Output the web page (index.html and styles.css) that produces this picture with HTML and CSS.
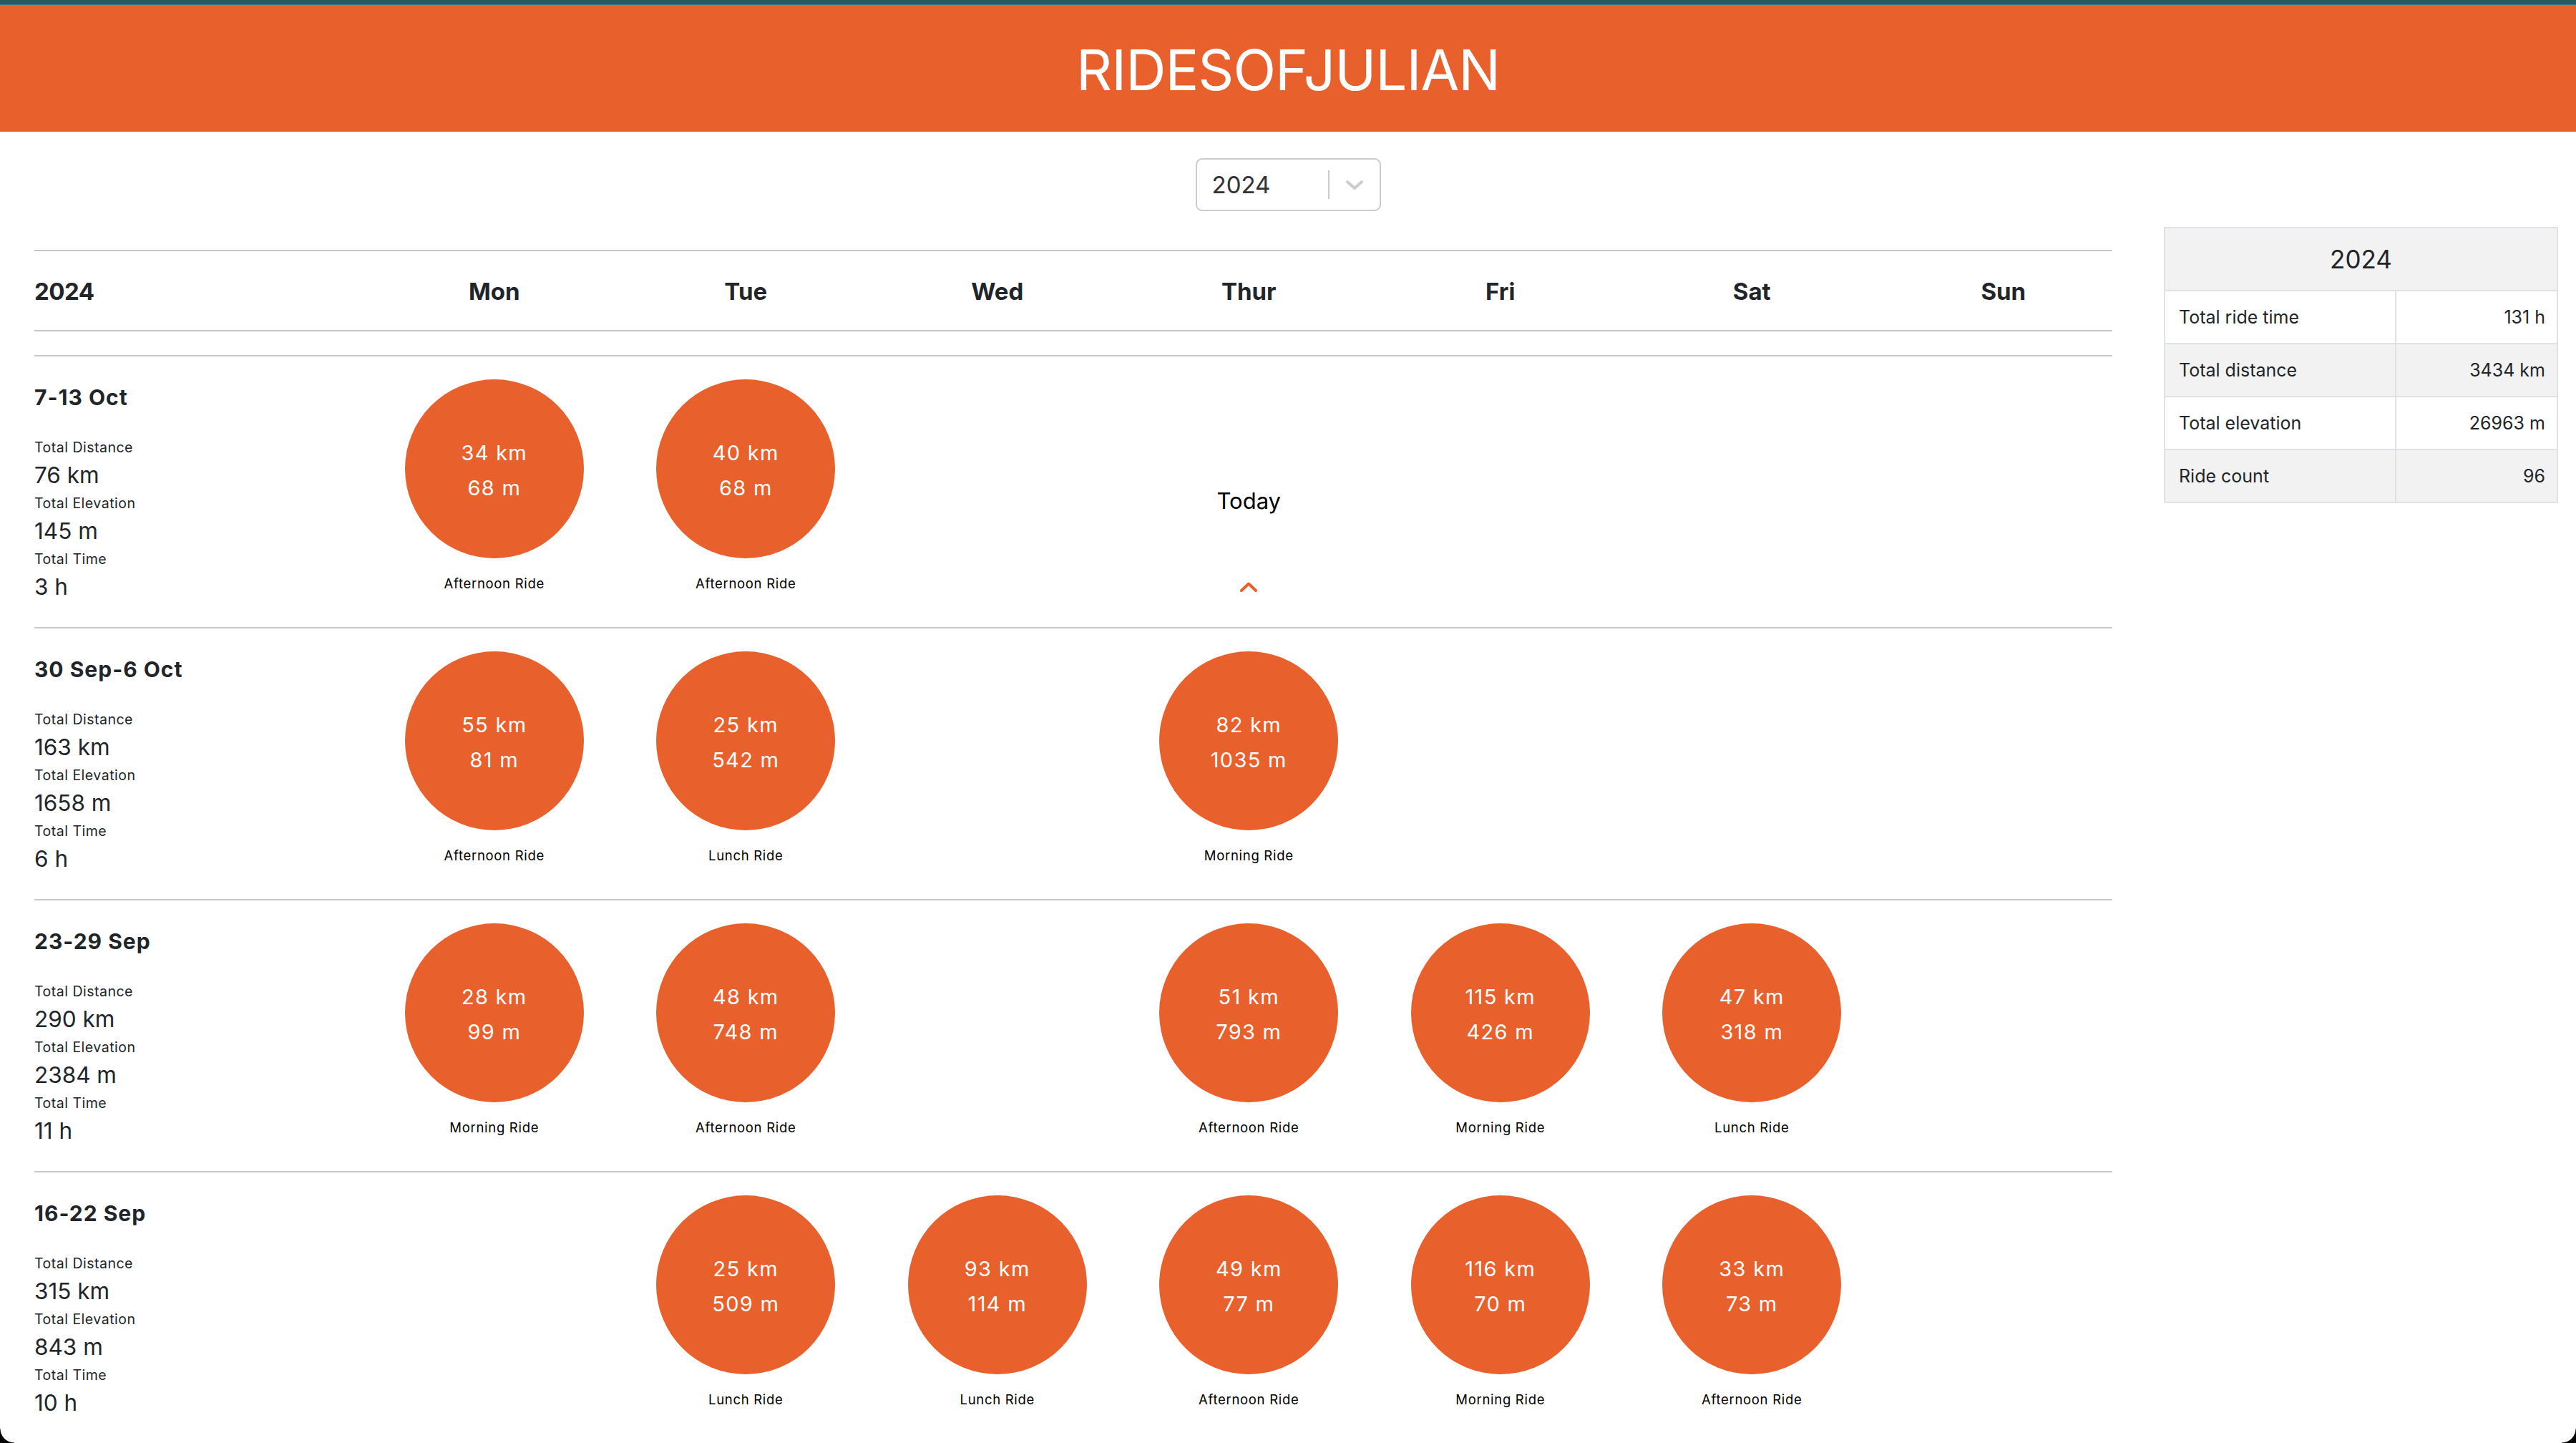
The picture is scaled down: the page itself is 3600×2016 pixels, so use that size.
FILE: index.html
```html
<!DOCTYPE html>
<html lang="en">
<head>
<meta charset="utf-8">
<title>RIDESOFJULIAN</title>
<link rel="stylesheet" href="styles.css">
</head>
<body>
<div class="chrome"></div>
<header class="topbar"><h1 class="brand">RIDESOFJULIAN</h1></header>

<div class="picker-wrap">
  <div class="picker">
    <span class="picker-value">2024</span>
    <span class="picker-sep"></span>
    <span class="picker-ind">
      <svg width="26" height="16" viewBox="0 0 26 16"><path d="M3 3 L13 12 L23 3" fill="none" stroke="#cccccc" stroke-width="4" stroke-linecap="round" stroke-linejoin="round"/></svg>
    </span>
  </div>
</div>

<div class="content">
  <div class="calendar">
    <div class="grid head">
      <div class="hcell first">2024</div>
      <div class="hcell">Mon</div>
      <div class="hcell">Tue</div>
      <div class="hcell">Wed</div>
      <div class="hcell">Thur</div>
      <div class="hcell">Fri</div>
      <div class="hcell">Sat</div>
      <div class="hcell">Sun</div>
    </div>
    <div class="spacer"></div>

    <div class="grid week">
      <div class="summary">
        <div class="wtitle">7-13 Oct</div>
        <div class="slabel">Total Distance</div><div class="svalue">76 km</div>
        <div class="slabel">Total Elevation</div><div class="svalue">145 m</div>
        <div class="slabel">Total Time</div><div class="svalue">3 h</div>
      </div>
      <div class="day"><div class="bubble"><span>34 km</span><span>68 m</span></div><div class="rname">Afternoon Ride</div></div>
      <div class="day"><div class="bubble"><span>40 km</span><span>68 m</span></div><div class="rname">Afternoon Ride</div></div>
      <div class="day"></div>
      <div class="day today"><div class="today-text">Today</div>
        <svg class="today-chev" width="26" height="16" viewBox="0 0 26 16"><path d="M3 13 L13 3.5 L23 13" fill="none" stroke="#e8602c" stroke-width="4" stroke-linecap="round" stroke-linejoin="round"/></svg>
      </div>
      <div class="day"></div>
      <div class="day"></div>
      <div class="day"></div>
    </div>

    <div class="grid week">
      <div class="summary">
        <div class="wtitle">30 Sep-6 Oct</div>
        <div class="slabel">Total Distance</div><div class="svalue">163 km</div>
        <div class="slabel">Total Elevation</div><div class="svalue">1658 m</div>
        <div class="slabel">Total Time</div><div class="svalue">6 h</div>
      </div>
      <div class="day"><div class="bubble"><span>55 km</span><span>81 m</span></div><div class="rname">Afternoon Ride</div></div>
      <div class="day"><div class="bubble"><span>25 km</span><span>542 m</span></div><div class="rname">Lunch Ride</div></div>
      <div class="day"></div>
      <div class="day"><div class="bubble"><span>82 km</span><span>1035 m</span></div><div class="rname">Morning Ride</div></div>
      <div class="day"></div>
      <div class="day"></div>
      <div class="day"></div>
    </div>

    <div class="grid week">
      <div class="summary">
        <div class="wtitle">23-29 Sep</div>
        <div class="slabel">Total Distance</div><div class="svalue">290 km</div>
        <div class="slabel">Total Elevation</div><div class="svalue">2384 m</div>
        <div class="slabel">Total Time</div><div class="svalue">11 h</div>
      </div>
      <div class="day"><div class="bubble"><span>28 km</span><span>99 m</span></div><div class="rname">Morning Ride</div></div>
      <div class="day"><div class="bubble"><span>48 km</span><span>748 m</span></div><div class="rname">Afternoon Ride</div></div>
      <div class="day"></div>
      <div class="day"><div class="bubble"><span>51 km</span><span>793 m</span></div><div class="rname">Afternoon Ride</div></div>
      <div class="day"><div class="bubble"><span>115 km</span><span>426 m</span></div><div class="rname">Morning Ride</div></div>
      <div class="day"><div class="bubble"><span>47 km</span><span>318 m</span></div><div class="rname">Lunch Ride</div></div>
      <div class="day"></div>
    </div>

    <div class="grid week">
      <div class="summary">
        <div class="wtitle">16-22 Sep</div>
        <div class="slabel">Total Distance</div><div class="svalue">315 km</div>
        <div class="slabel">Total Elevation</div><div class="svalue">843 m</div>
        <div class="slabel">Total Time</div><div class="svalue">10 h</div>
      </div>
      <div class="day"></div>
      <div class="day"><div class="bubble"><span>25 km</span><span>509 m</span></div><div class="rname">Lunch Ride</div></div>
      <div class="day"><div class="bubble"><span>93 km</span><span>114 m</span></div><div class="rname">Lunch Ride</div></div>
      <div class="day"><div class="bubble"><span>49 km</span><span>77 m</span></div><div class="rname">Afternoon Ride</div></div>
      <div class="day"><div class="bubble"><span>116 km</span><span>70 m</span></div><div class="rname">Morning Ride</div></div>
      <div class="day"><div class="bubble"><span>33 km</span><span>73 m</span></div><div class="rname">Afternoon Ride</div></div>
      <div class="day"></div>
    </div>
  </div>

  <aside class="stats">
    <div class="stats-head">2024</div>
    <div class="srow"><div class="sk">Total ride time</div><div class="sv">131 h</div></div>
    <div class="srow alt"><div class="sk">Total distance</div><div class="sv">3434 km</div></div>
    <div class="srow"><div class="sk">Total elevation</div><div class="sv">26963 m</div></div>
    <div class="srow alt last"><div class="sk">Ride count</div><div class="sv">96</div></div>
  </aside>
</div>

<div class="corner corner-left"></div>
<div class="corner corner-right"></div>
</body>
</html>
```

FILE: styles.css
```css
html, body {
  margin: 0;
  padding: 0;
  background: #ffffff;
}
body {
  font-family: Inter, "Liberation Sans", Arial, sans-serif;
  color: #212529;
  width: 3600px;
  height: 2016px;
  overflow: hidden;
}

.chrome {
  height: 6px;
  background: #275a5f;
  border-bottom: 1px solid #3f7b80;
}

.topbar {
  height: 177px;
  background: #e8602c;
  display: flex;
  align-items: center;
  justify-content: center;
}
.brand {
  margin: 4px 0 0 0;
  font-weight: 400;
  font-size: 78px;
  line-height: 94px;
  color: #ffffff;
  letter-spacing: -1px;
}

.picker-wrap {
  display: flex;
  justify-content: center;
  padding-top: 37px;
}
.picker {
  box-sizing: border-box;
  width: 259px;
  height: 74px;
  border: 2px solid #cccccc;
  border-radius: 9px;
  display: flex;
  align-items: center;
}
.picker-value {
  flex: 1;
  padding-left: 21px;
  font-size: 33px;
  color: #333333;
}
.picker-sep {
  width: 2px;
  height: 40px;
  background: #cccccc;
}
.picker-ind {
  width: 70px;
  display: flex;
  justify-content: center;
  align-items: center;
  padding-top: 2px;
}

.content {
  display: flex;
  align-items: flex-start;
  padding-left: 48px;
  margin-top: 22px;
  gap: 72px;
}

.calendar {
  width: 2904px;
  flex-shrink: 0;
  margin-top: 32px;
}

.grid {
  display: grid;
  grid-template-columns: 467px repeat(7, 351.5px);
  width: 2904px;
}

.head {
  border-top: 2px solid #c8c8c8;
  border-bottom: 2px solid #c8c8c8;
  padding: 32px 0 30px 0;
}
.hcell {
  font-weight: 700;
  font-size: 33px;
  line-height: 48px;
  text-align: center;
  color: #212529;
}
.hcell.first {
  text-align: left;
  letter-spacing: -0.5px;
}

.spacer {
  height: 33px;
}

.week {
  box-sizing: border-box;
  height: 380px;
  border-top: 2px solid #c8c8c8;
}

.summary {
  padding-top: 36px;
}
.wtitle {
  font-weight: 700;
  font-size: 30px;
  line-height: 43px;
  margin-bottom: 33px;
  letter-spacing: 1px;
  color: #212529;
}
.slabel {
  font-size: 19.5px;
  line-height: 30px;
  letter-spacing: 0.5px;
  color: #212529;
}
.svalue {
  font-size: 31.5px;
  line-height: 48px;
  color: #212529;
}

.day {
  display: flex;
  flex-direction: column;
  align-items: center;
  padding-top: 32px;
}
.bubble {
  box-sizing: border-box;
  width: 250px;
  height: 250px;
  padding-top: 4px;
  border-radius: 50%;
  background: #e8602c;
  color: #ffffff;
  display: flex;
  flex-direction: column;
  align-items: center;
  justify-content: center;
  font-size: 29px;
  line-height: 49px;
  letter-spacing: 1.3px;
}
.rname {
  margin-top: 21px;
  font-size: 18.5px;
  line-height: 28px;
  letter-spacing: 0.7px;
  color: #000000;
}

.today {
  padding-top: 178px;
}
.today-text {
  font-size: 31px;
  line-height: 48px;
  color: #000000;
}
.today-chev {
  margin-top: 88px;
}

.stats {
  box-sizing: border-box;
  width: 551px;
  flex-shrink: 0;
  border: 2px solid #dee2e6;
  color: #212529;
}
.stats-head {
  height: 86px;
  background: #f2f2f2;
  border-bottom: 2px solid #dee2e6;
  display: flex;
  align-items: center;
  justify-content: center;
  font-size: 35px;
}
.srow {
  display: grid;
  grid-template-columns: 323px 1fr;
  height: 72px;
  border-bottom: 2px solid #dee2e6;
  font-size: 25px;
}
.srow.last {
  border-bottom: none;
}
.srow.alt {
  background: #f2f2f2;
}
.sk {
  display: flex;
  align-items: center;
  padding-left: 19px;
  border-right: 2px solid #dee2e6;
}
.sv {
  display: flex;
  align-items: center;
  justify-content: flex-end;
  padding-right: 16px;
}

.corner {
  position: fixed;
  bottom: 0;
  width: 20px;
  height: 20px;
}
.corner-left {
  left: 0;
  background: radial-gradient(circle at 100% 0, rgba(0,0,0,0) 19px, #000 20px);
}
.corner-right {
  right: 0;
  background: radial-gradient(circle at 0 0, rgba(0,0,0,0) 19px, #000 20px);
}
```
